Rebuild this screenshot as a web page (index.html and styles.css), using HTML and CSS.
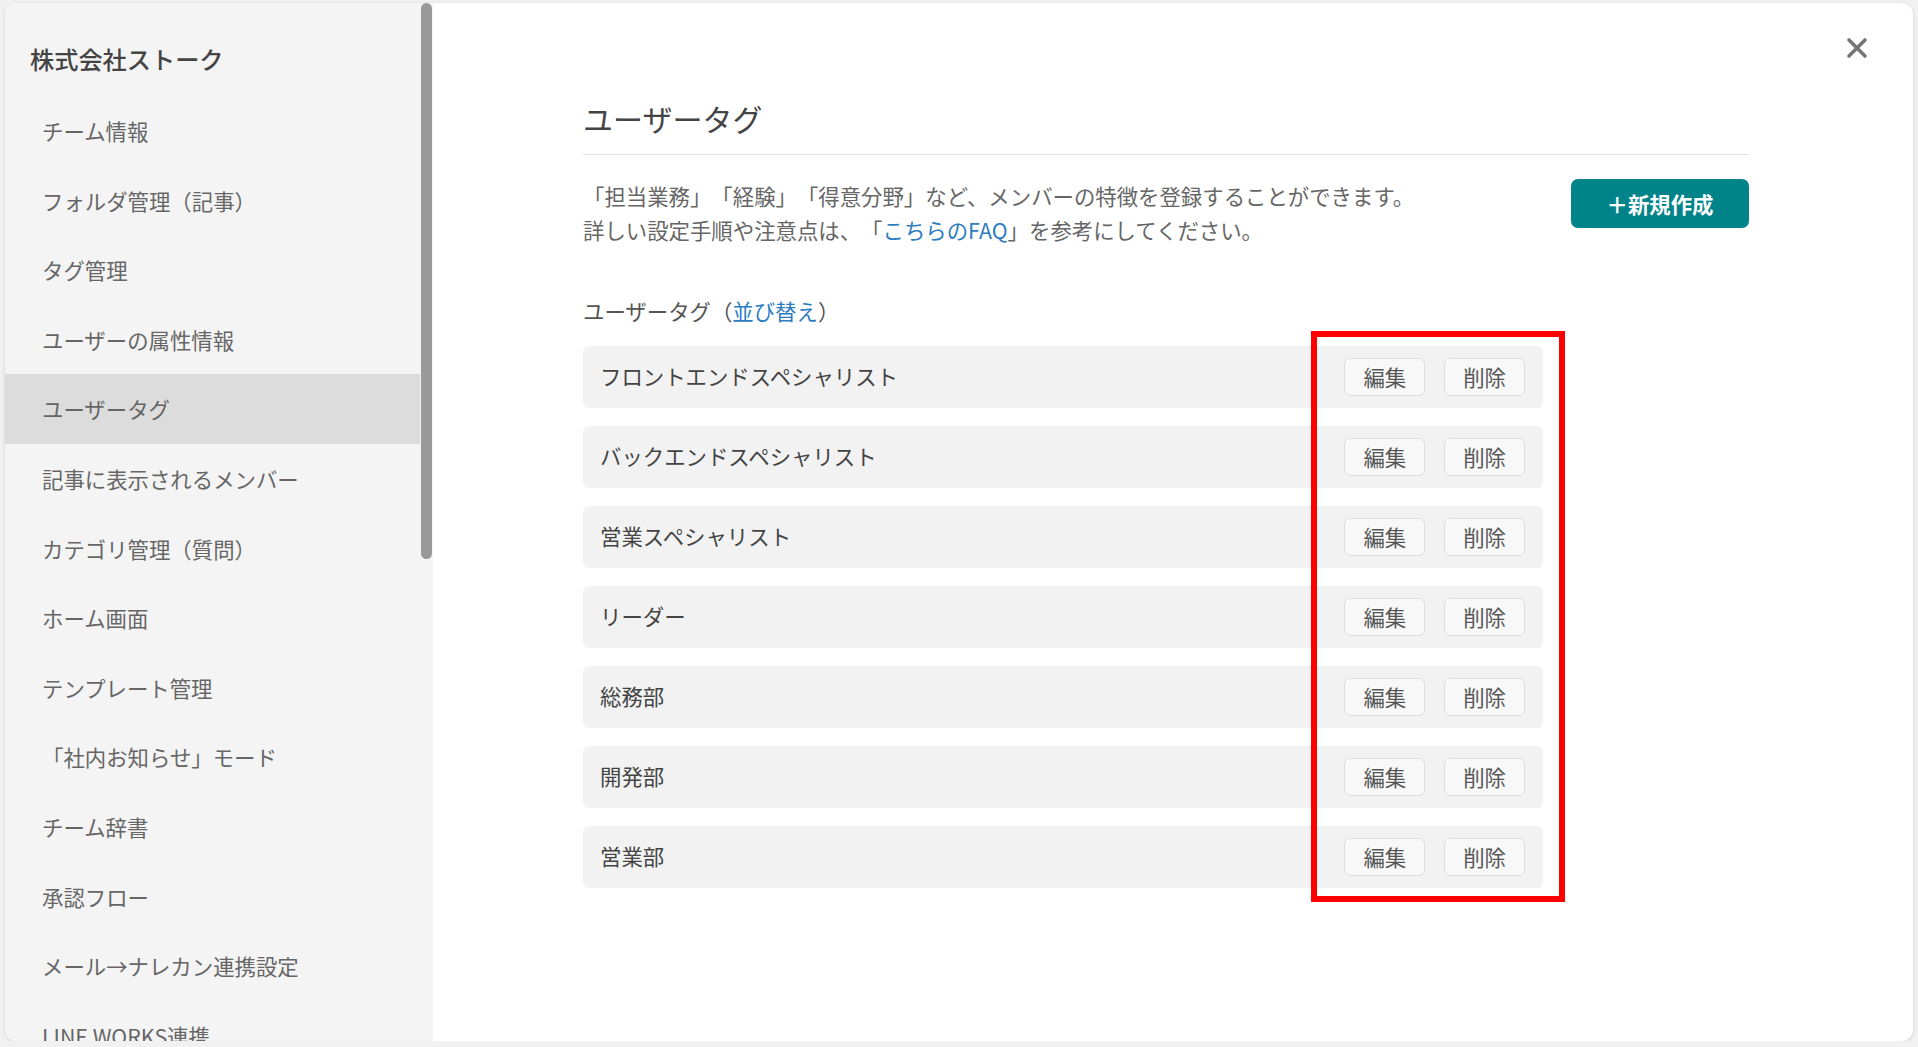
FILE: index.html
```html
<!DOCTYPE html>
<html lang="ja">
<head>
    <meta charset="UTF-8">
    <meta name="viewport" content="width=device-width, initial-scale=1.0">
    <title>ユーザータグ - 設定</title>
    <link rel="stylesheet" href="styles.css">
</head>
<body>
    <div class="modal">
        <aside class="sidebar">
            <nav class="side-nav">
                <h1 class="team-name">株式会社ストーク</h1>
                <ul class="menu">
                    <li class="menu-item">チーム情報</li>
                    <li class="menu-item">フォルダ管理（記事）</li>
                    <li class="menu-item">タグ管理</li>
                    <li class="menu-item">ユーザーの属性情報</li>
                    <li class="menu-item active">ユーザータグ</li>
                    <li class="menu-item">記事に表示されるメンバー</li>
                    <li class="menu-item">カテゴリ管理（質問）</li>
                    <li class="menu-item">ホーム画面</li>
                    <li class="menu-item">テンプレート管理</li>
                    <li class="menu-item">「社内お知らせ」モード</li>
                    <li class="menu-item">チーム辞書</li>
                    <li class="menu-item">承認フロー</li>
                    <li class="menu-item">メール→ナレカン連携設定</li>
                    <li class="menu-item">LINE WORKS連携</li>
                </ul>
            </nav>
            <div class="scroll-track"><div class="scroll-thumb"></div></div>
        </aside>

        <main class="content">
            <button class="close-btn" aria-label="閉じる">
                <svg width="22" height="22" viewBox="0 0 22 22">
                    <path d="M3 3 L19 19 M19 3 L3 19" stroke="#767676" stroke-width="3.6" stroke-linecap="round" fill="none"/>
                </svg>
            </button>

            <div class="panel">
                <h2 class="page-title">ユーザータグ</h2>

                <div class="intro">
                    <p class="intro-text">
                        「担当業務」「経験」「得意分野」など、メンバーの特徴を登録することができます。<br>
                        詳しい設定手順や注意点は、「<span class="link">こちらのFAQ</span>」を参考にしてください。
                    </p>
                    <button class="create-btn">＋新規作成</button>
                </div>

                <div class="list-label">ユーザータグ（<span class="link">並び替え</span>）</div>

                <div class="tag-list">
                    <div class="tag-row">
                        <span class="tag-name">フロントエンドスペシャリスト</span>
                        <div class="row-actions"><button class="action-btn">編集</button><button class="action-btn">削除</button></div>
                    </div>
                    <div class="tag-row">
                        <span class="tag-name">バックエンドスペシャリスト</span>
                        <div class="row-actions"><button class="action-btn">編集</button><button class="action-btn">削除</button></div>
                    </div>
                    <div class="tag-row">
                        <span class="tag-name">営業スペシャリスト</span>
                        <div class="row-actions"><button class="action-btn">編集</button><button class="action-btn">削除</button></div>
                    </div>
                    <div class="tag-row">
                        <span class="tag-name">リーダー</span>
                        <div class="row-actions"><button class="action-btn">編集</button><button class="action-btn">削除</button></div>
                    </div>
                    <div class="tag-row">
                        <span class="tag-name">総務部</span>
                        <div class="row-actions"><button class="action-btn">編集</button><button class="action-btn">削除</button></div>
                    </div>
                    <div class="tag-row">
                        <span class="tag-name">開発部</span>
                        <div class="row-actions"><button class="action-btn">編集</button><button class="action-btn">削除</button></div>
                    </div>
                    <div class="tag-row">
                        <span class="tag-name">営業部</span>
                        <div class="row-actions"><button class="action-btn">編集</button><button class="action-btn">削除</button></div>
                    </div>

                    <!-- annotation frame around the action buttons -->
                    <div class="highlight-box"></div>
                </div>
            </div>
        </main>
    </div>
</body>
</html>
```

FILE: styles.css
```css
body {
    margin: 0;
    background-color: #f1f1f1;
    font-family: "Noto Sans CJK JP", "Noto Sans", sans-serif;
    text-spacing-trim: space-all;
}
.modal {
    display: flex;
    margin: 3px 5px 0 5px;
    height: 1038px;
    background: white;
    border-radius: 12px;
    overflow: hidden;
    box-shadow: 0px 1px 4px rgba(0,0,0,0.12);
}

/* sidebar */
.sidebar {
    width: 428px;
    flex-shrink: 0;
    display: flex;
    background-color: #f4f4f4;
}
.side-nav {
    flex: 1;
    overflow: hidden;
}
.team-name {
    margin: 0;
    padding: 38px 0 19px 25px;
    font-size: 24.2px;
    line-height: 36px;
    font-weight: 500;
    color: #444;
}
.menu {
    list-style: none;
    margin: 0;
    padding: 0;
}
.menu-item {
    height: 69.6px;
    line-height: 69.6px;
    padding-left: 37px;
    font-size: 21.4px;
    color: #666;
    white-space: nowrap;
    cursor: pointer;
}
.menu-item.active {
    background-color: #dcdcdc;
}
.scroll-track {
    width: 13px;
    padding: 0 1px;
    box-sizing: border-box;
}
.scroll-thumb {
    height: 556px;
    background-color: #999;
    border-radius: 6px;
}

/* main */
.content {
    flex: 1;
    position: relative;
}
.close-btn {
    position: absolute;
    top: 34px;
    right: 45px;
    padding: 0;
    border: none;
    background: none;
    cursor: pointer;
    line-height: 0;
}
.panel {
    width: 1166px;
    margin-left: 150px;
    padding-top: 94px;
}
.page-title {
    margin: 0;
    padding-bottom: 15px;
    font-size: 30px;
    line-height: 42px;
    font-weight: 400;
    color: #444;
    border-bottom: 1px solid #ddd;
}
.intro {
    display: flex;
    justify-content: space-between;
    align-items: flex-start;
    margin-top: 24px;
}
.intro-text {
    margin: 0;
    font-size: 21.4px;
    line-height: 34px;
    color: #666;
}
.link {
    color: #2d7cc0;
    cursor: pointer;
}
.create-btn {
    width: 178px;
    height: 49px;
    border: none;
    border-radius: 7px;
    background-color: #00848a;
    color: white;
    font-family: inherit;
    font-size: 21.4px;
    font-weight: 700;
    cursor: pointer;
}
.list-label {
    margin-top: 47px;
    font-size: 21.4px;
    line-height: 34px;
    color: #555;
}
.tag-list {
    position: relative;
    width: 960px;
    margin-top: 18px;
    display: flex;
    flex-direction: column;
    gap: 18px;
}
.tag-row {
    height: 62px;
    display: flex;
    align-items: center;
    justify-content: space-between;
    padding: 0 18px 0 17px;
    box-sizing: border-box;
    background-color: #f2f2f2;
    border-radius: 6px;
}
.tag-name {
    font-size: 21.4px;
    line-height: 30px;
    padding-bottom: 2px;
    color: #444;
}
.row-actions {
    display: flex;
    gap: 19px;
}
.action-btn {
    height: 38px;
    padding: 0 18px;
    border: 1px solid #ddd;
    border-radius: 6px;
    background-color: #f8f8f8;
    font-family: inherit;
    font-size: 21.4px;
    line-height: 36px;
    color: #555;
    cursor: pointer;
}
.highlight-box {
    position: absolute;
    left: 728px;
    top: -15px;
    width: 254px;
    height: 571px;
    border: 6px solid #ff0000;
    box-sizing: border-box;
}
```
